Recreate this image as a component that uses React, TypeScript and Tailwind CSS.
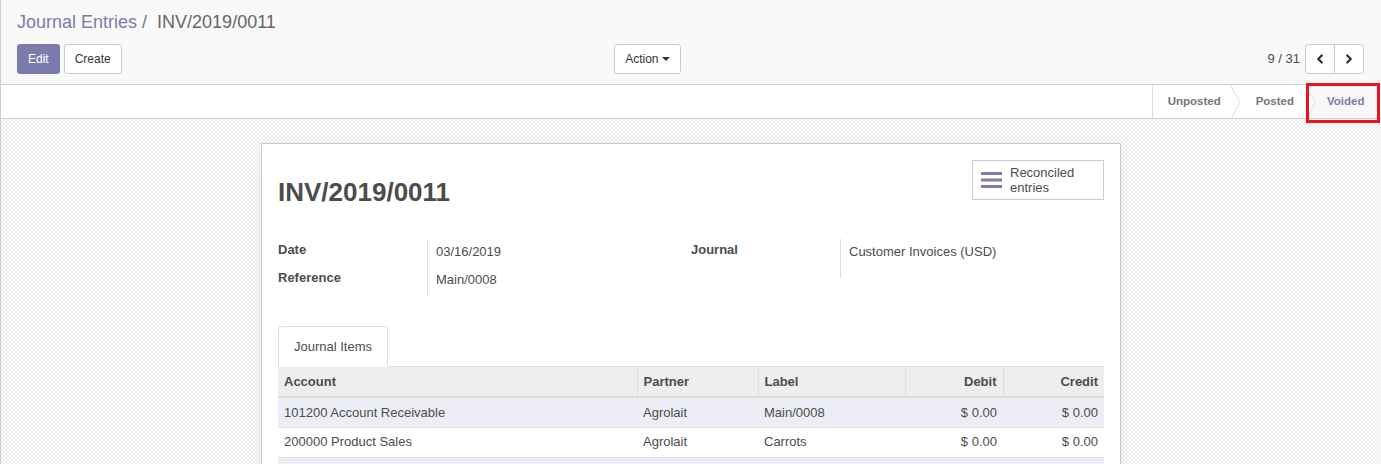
import React from "react";
import { ChevronLeft, ChevronRight } from "lucide-react";

const Chevron: React.FC = () => (
  <svg width="10" height="33" viewBox="0 0 10 33" className="block shrink-0">
    <polygon points="0,0 9,16.5 0,33" fill="#ffffff" />
    <polyline points="0,0 9,16.5 0,33" fill="none" stroke="#dcdcdc" strokeWidth="1" />
  </svg>
);

const rows = [
  { account: "101200 Account Receivable", partner: "Agrolait", label: "Main/0008", debit: "$ 0.00", credit: "$ 0.00" },
  { account: "200000 Product Sales", partner: "Agrolait", label: "Carrots", debit: "$ 0.00", credit: "$ 0.00" },
];

const App: React.FC = () => {
  return (
    <div className="relative h-[464px] overflow-hidden border-l border-[#cfcfcf] font-['Liberation_Sans',Arial,sans-serif] text-[13px] text-[#4c4c4c]">
      {/* control panel */}
      <div className="border-b border-[#cfcfcf] bg-[#f9f9f9] pl-[16px] pr-[17px] pt-[10px] pb-[10px]">
        <div className="flex h-[24px] items-center text-[18px] leading-[24px]">
          <span className="text-[#7c7bad]">Journal Entries</span>
          <span className="ml-[5px] text-[#777]">/</span>
          <span className="ml-[10px] text-[#666]">INV/2019/0011</span>
        </div>
        <div className="mt-[10px] flex h-[30px] items-center">
          <div className="flex w-1/2 items-center justify-between pr-[10px]">
            <div className="flex gap-[4px]">
              <button className="h-[30px] rounded-[3px] bg-[#7c7bad] px-[11px] text-[12px] text-white">Edit</button>
              <button className="h-[30px] rounded-[3px] border border-[#cccccc] bg-white px-[10px] text-[12px] text-[#333]">Create</button>
            </div>
            <button className="flex h-[30px] items-center rounded-[3px] border border-[#cccccc] bg-white px-[10px] text-[12px] text-[#333]">
              Action
              <span className="ml-[3px] inline-block h-0 w-0 border-x-[4px] border-t-[4px] border-x-transparent border-t-[#333]" />
            </button>
          </div>
          <div className="flex w-1/2 items-center justify-end">
            <span className="mr-[5px] text-[13px] text-[#4c4c4c]">9 / 31</span>
            <div className="flex">
              <button className="flex h-[30px] w-[30px] items-center justify-center rounded-l-[3px] border border-[#cccccc] bg-white">
                <ChevronLeft size={14} strokeWidth={4} color="#333" />
              </button>
              <button className="-ml-px flex h-[30px] w-[30px] items-center justify-center rounded-r-[3px] border border-[#cccccc] bg-white">
                <ChevronRight size={14} strokeWidth={4} color="#333" />
              </button>
            </div>
          </div>
        </div>
      </div>

      {/* status bar */}
      <div className="flex h-[34px] justify-end border-b border-[#cfcfcf] bg-white">
        <div className="flex items-stretch border-l border-[#dcdcdc] pt-px text-[11.5px] font-bold">
          <div className="flex items-center pl-[15px] pr-[10px] text-[#777]">Unposted</div>
          <Chevron />
          <div className="flex items-center pl-[15px] pr-[12px] text-[#777]">Posted</div>
          <div className="flex w-[75px] items-stretch bg-[#f7f7f7]">
            <Chevron />
            <div className="flex items-center pl-[11px] text-[#7c7bad]">Voided</div>
          </div>
        </div>
      </div>

      {/* sheet background */}
      <div className="h-full bg-[repeating-conic-gradient(#eeeeee_0_25%,#fbfbfb_0_50%)] bg-[length:4px_4px] pt-[24px]">
        <div className="mx-auto w-[860px] border border-[#c8c8d3] bg-white px-[16px] pt-[16px] pb-[40px] shadow-[0_5px_20px_-15px_rgba(0,0,0,0.4)]">
          <div className="flex items-start justify-between">
            <h1 className="pt-[16px] text-[26px] font-bold leading-[32px] text-[#4c4c4c]">INV/2019/0011</h1>
            <button className="flex h-[40px] w-[132px] items-center border border-[#cccccc] bg-white pl-[8px] text-left text-[13px] leading-[15px] text-[#4c4c4c]">
              <svg width="21" height="18" viewBox="0 0 21 18" className="mr-[8px] shrink-0">
                <rect x="0" y="1" width="21" height="3" fill="#7c7bad" />
                <rect x="0" y="7.5" width="21" height="3" fill="#7c7bad" />
                <rect x="0" y="14" width="21" height="3" fill="#7c7bad" />
              </svg>
              <span>
                Reconciled
                <br />
                entries
              </span>
            </button>
          </div>

          <div className="mt-[26px] flex">
            <div className="w-1/2">
              <div className="flex">
                <div className="w-[149px] shrink-0">
                  <div className="h-[28px] pt-[6px] font-bold">Date</div>
                  <div className="h-[28px] pt-[6px] font-bold">Reference</div>
                </div>
                <div className="mt-[5px] border-l border-[#dddddd] pl-[8px]">
                  <div className="h-[28px] pt-[3px]">03/16/2019</div>
                  <div className="h-[28px] pt-[3px]">Main/0008</div>
                </div>
              </div>
            </div>
            <div className="w-1/2">
              <div className="flex">
                <div className="w-[149px] shrink-0">
                  <div className="h-[28px] pt-[6px] font-bold">Journal</div>
                </div>
                <div className="mt-[5px] h-[39px] border-l border-[#dddddd] pl-[8px]">
                  <div className="h-[28px] pt-[3px]">Customer Invoices (USD)</div>
                </div>
              </div>
            </div>
          </div>

          <div className="mt-[31px] flex border-b border-[#dddddd]">
            <div className="-mb-px flex h-[41px] items-center rounded-t-[4px] border border-b-white border-[#dddddd] bg-white px-[15px] text-[13px] text-[#4c4c4c]">
              Journal Items
            </div>
          </div>

          <table className="w-full table-fixed border-collapse text-[13px]">
            <colgroup>
              <col className="w-[359px]" />
              <col className="w-[121px]" />
              <col className="w-[147px]" />
              <col className="w-[98px]" />
              <col />
            </colgroup>
            <thead>
              <tr className="h-[30px] border-b-2 border-[#dddddd] bg-[#eeeeee] font-bold">
                <th className="border-r border-[#dddddd] px-[6px] text-left">Account</th>
                <th className="border-r border-[#dddddd] px-[6px] text-left">Partner</th>
                <th className="border-r border-[#dddddd] px-[6px] text-left">Label</th>
                <th className="border-r border-[#dddddd] px-[6px] text-right">Debit</th>
                <th className="px-[6px] text-right">Credit</th>
              </tr>
            </thead>
            <tbody>
              {rows.map((r, i) => (
                <tr key={i} className={`h-[30px] border-b border-[#dddddd] ${i % 2 === 0 ? "bg-[#edeef5]" : "bg-white"}`}>
                  <td className="px-[6px]">{r.account}</td>
                  <td className="px-[6px]">{r.partner}</td>
                  <td className="px-[6px]">{r.label}</td>
                  <td className="px-[6px] text-right">{r.debit}</td>
                  <td className="px-[6px] text-right">{r.credit}</td>
                </tr>
              ))}
              <tr className="h-[30px] bg-[#edeef5]">
                <td colSpan={5} />
              </tr>
            </tbody>
          </table>
        </div>
      </div>

      {/* highlight box */}
      <div className="pointer-events-none absolute left-[1305px] top-[83px] h-[40px] w-[74px] border-[3px] border-[#e8151f]" />
    </div>
  );
};

export default App;
